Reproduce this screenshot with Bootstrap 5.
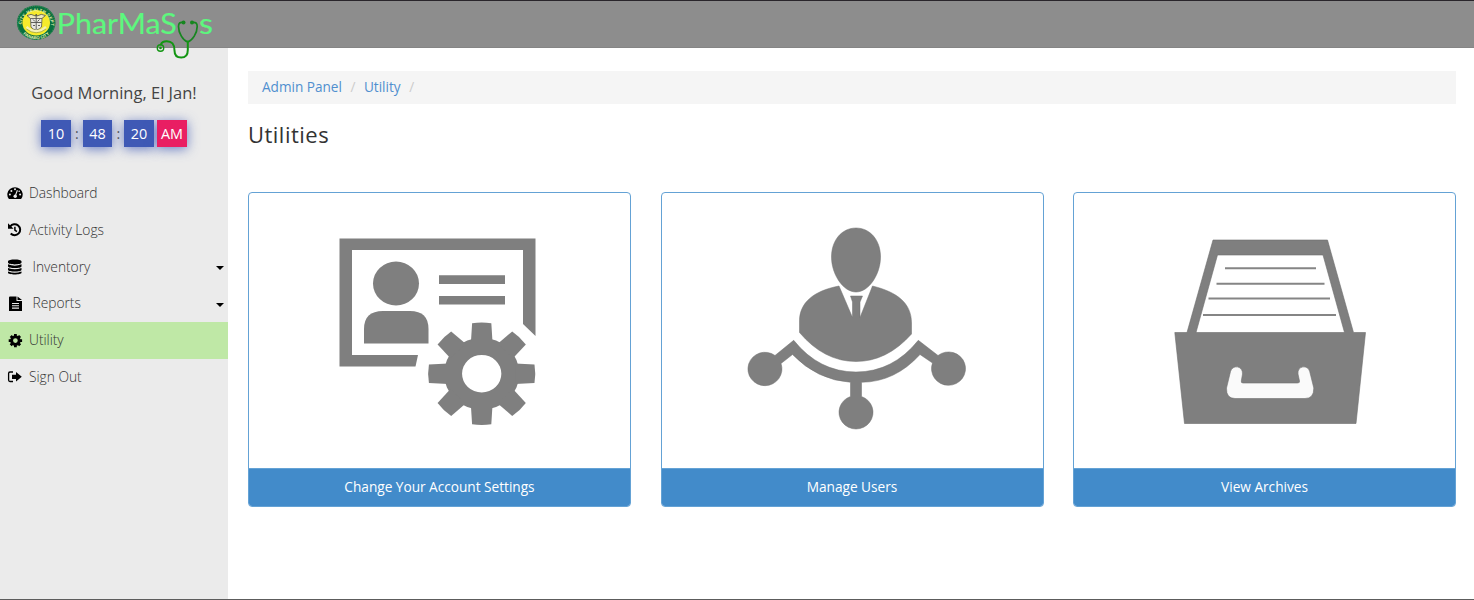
<!DOCTYPE html>
<html lang="en">
<head>
<meta charset="utf-8">
<meta name="viewport" content="width=device-width, initial-scale=1">
<title>PharMaSys - Utilities</title>
<link href="https://cdn.jsdelivr.net/npm/bootstrap@5.3.0/dist/css/bootstrap.min.css" rel="stylesheet">
<style>
  body { font-family: "Open Sans", "Noto Sans", sans-serif; font-size: 14px; color: #333; background: #fff; }
  .app { height: 600px; border-top: 1px solid #29252b; border-bottom: 1px solid #5c5c5c; }
  .topbar { height: 47px; background: #8d8d8d; border-bottom: 1px solid #858585; padding: 0 0 0 14px; z-index: 2; }
  .brand-art { width: 206px; height: 64px; overflow: visible; }
  .side { width: 228px; background: #ebebeb; }
  .greeting { font-size: 16.5px; line-height: 24px; padding-top: 33px; color: #444; }
  .clock { gap: 3.6px; padding-top: 14.6px; margin-bottom: 27.9px; color: #555; }
  .clock b { width: 29.3px; height: 27.5px; font-weight: 400; font-size: 14.4px; color: #fff; background: #3f59b5; box-shadow: 0 2px 12px rgba(63,89,181,.75); }
  .clock b.ampm { background: #e91e63; box-shadow: 0 2px 12px rgba(63,89,181,.75); }
  .clock i { font-style: normal; width: 5px; text-align: center; }
  .side-link { height: 36.8px; padding: 0 4px 0 7px; font-weight: 300; font-size: 13.8px; letter-spacing: -.03px; color: #333; }
  .side-link:hover { color: #000; }
  .side-link.active { background: #bfe8a6; }
  .side-link svg.ico { width: 16px; height: 16px; margin-right: 6px; flex: none; }
  .side-link .wide { padding-left: 3.5px; }
  .caret { width: 0; height: 0; border: 4px solid transparent; border-top-color: #000; border-bottom: 0; margin-top: 2px; }
  .content { padding: 22.5px 18px 0 20px; }
  .crumbs { background: #f5f5f5; height: 33.5px; padding: 0 14px; font-size: 13.6px; }
  .crumbs a { color: #508fcf; text-decoration: none; }
  .crumbs .sep { color: #ccc; padding: 0 8.5px; }
  .page-title { font-size: 22px; font-weight: 400; line-height: 28px; margin: 15.5px 0 44.1px; letter-spacing: .48px; color: #333; }
  .tiles { gap: 29.5px; }
  .tile { flex: 1 1 0; border: 1px solid #64a2d5; border-radius: 4px; background: #fff; overflow: hidden; }
  .tile svg { display: block; width: 100%; height: 275px; }
  .tile .card-footer { background: #428bca; color: #fff; border-top: 1px solid #64a2d5; border-radius: 0; height: 38px; padding: 0; font-size: 13.7px; letter-spacing: -.03px; }
</style>
</head>
<body>
<div class="app d-flex flex-column overflow-hidden">
  <header class="topbar position-relative flex-shrink-0">
    <svg class="brand-art d-block" viewBox="14 1 206 64" role="img" aria-label="PharMaSys">
      <defs>
        <path id="ringTop" d="M22.300 29.500A14.800 13.600 0 1 1 50.100 29.500"/>
        <path id="ringLow" d="M19.500 29A18 16.200 0 0 0 52.900 29"/>
      </defs>
      <ellipse cx="36.200" cy="22.700" rx="19.300" ry="17.200" fill="#08703f"/>
      <ellipse cx="36.200" cy="22.700" rx="18.600" ry="16.600" fill="none" stroke="#87b878" stroke-width=".5" stroke-dasharray="1 1"/>
      <ellipse cx="36.200" cy="22.700" rx="13.800" ry="12.700" fill="#f6eb2c"/>
      <g font-family="Liberation Sans, sans-serif" font-weight="700" font-size="4.200" fill="#eef2b0">
        <text><textPath href="#ringTop" startOffset="5" letter-spacing=".35">CITY HEALTH DEPT</textPath></text>
        <text><textPath href="#ringLow" startOffset="50%" text-anchor="middle">PANABO CITY</textPath></text>
      </g>
      <path d="M27 15.500q4-2.500 8.500.5l.7-2 .7 2q4.500-3 8.500-.5l-4 3.500h-10.500z" fill="#ece9bd" stroke="#4b4e3d" stroke-width=".8"/>
      <path d="M30.500 18.500h11.500l-.5 8.500q-2 2.500-5.300 3-3.500-.5-5.200-3z" fill="#e9e9e1" stroke="#555" stroke-width=".8"/>
      <path d="M36.200 15v14M31 22.500h10.500M33 19.500l2 2M39.500 19.500l-2 2M33 25.500h2M38 25.500h2" stroke="#50504d" stroke-width=".9" fill="none"/>
      <path d="M26.500 27q9.700 8.500 19.500 0" fill="none" stroke="#f4f1b3" stroke-width="2.500"/>
      <path d="M26.500 29q9.700 7.500 19.500 0" fill="none" stroke="#80883b" stroke-width=".6"/>
      <g font-family="Lato, sans-serif" font-size="28" fill="#5df77e" stroke="#5df77e" stroke-width=".15">
        <text x="56.800" y="34.200" textLength="120" lengthAdjust="spacingAndGlyphs">PharMaS</text>
        <text x="199" y="34.200" textLength="14" lengthAdjust="spacingAndGlyphs">s</text>
      </g>
      <g fill="none" stroke="#129512" stroke-width="2" stroke-linecap="round" stroke-linejoin="round">
        <path d="M183 22.500Q178.500 21.500 178.500 26.500C178.500 33 183 40.500 187.700 42C192.500 40.500 197.200 33 197.200 26.500Q197.200 21.500 192.500 22.500" stroke="#16861f" stroke-width="1.700"/>
        <path d="M187.800 41.500V50Q187.800 57.600 181.200 57.600Q174.500 57.600 174.500 50.500Q174.500 41 166.500 41.200Q162 41.400 160.800 44.500"/>
        <circle cx="160.500" cy="48" r="3.200" stroke-width="1.400"/>
      </g>
      <circle cx="160.500" cy="48" r="1.300" fill="#129512"/>
      <circle cx="183.500" cy="22.500" r="2" fill="#16861f"/><circle cx="192" cy="22.500" r="2" fill="#16861f"/>
    </svg>
  </header>

  <div class="d-flex flex-grow-1">
    <aside class="side flex-shrink-0">
      <div class="greeting text-center">Good Morning, El Jan!</div>
      <div class="clock d-flex justify-content-center align-items-center">
        <b class="d-flex align-items-center justify-content-center">10</b><i>:</i>
        <b class="d-flex align-items-center justify-content-center">48</b><i>:</i>
        <b class="d-flex align-items-center justify-content-center">20</b>
        <b class="ampm d-flex align-items-center justify-content-center">AM</b>
      </div>
      <nav class="nav flex-column flex-nowrap">
        <a class="side-link nav-link d-flex align-items-center" href="#">
          <svg class="ico" viewBox="0 0 16 16"><path d="M1.600 13.500A7.700 7.300 0 1 1 14.400 13.500Q14.200 14 13.600 14H2.400Q1.800 14 1.600 13.500z"/><g fill="#ebebeb"><circle cx="2.900" cy="9.500" r="1"/><circle cx="4.400" cy="5.900" r="1"/><circle cx="8" cy="4.200" r="1"/><circle cx="13.100" cy="9.500" r="1"/><circle cx="12.200" cy="6.200" r=".8"/></g><path d="M10.400 5.200L8.600 10" stroke="#ebebeb" stroke-width="1.100"/><circle cx="8.200" cy="11.300" r="1.700" fill="#ebebeb"/></svg>
          <span>Dashboard</span></a>
        <a class="side-link nav-link d-flex align-items-center" href="#">
          <svg class="ico" viewBox="0 0 16 16"><path d="M3.200 4.500A5.500 5.500 0 1 1 3.700 11.500" fill="none" stroke="#000" stroke-width="2"/><path d="M1 1.300V6.800h5.600z"/><path d="M7.900 4.700v3.400l2 1.500" fill="none" stroke="#000" stroke-width="1.500"/></svg>
          <span>Activity Logs</span></a>
        <a class="side-link nav-link d-flex align-items-center" href="#">
          <svg class="ico" viewBox="0 0 16 16"><path d="M1 2.300C1-.2 14.500-.2 14.500 2.300V3.500C14.500 6 1 6 1 3.500zM1 5.300Q7.700 8 14.500 5.300V7.200C14.500 9.700 1 9.700 1 7.200zM1 9Q7.700 11.700 14.500 9V10.700C14.500 13.200 1 13.200 1 10.700zM1 12.500Q7.700 15 14.500 12.500V13.800C14.500 16 1 16 1 13.800z"/></svg>
          <span class="wide flex-grow-1">Inventory</span><span class="caret"></span></a>
        <a class="side-link nav-link d-flex align-items-center" href="#">
          <svg class="ico" viewBox="0 0 16 16"><path d="M3 .5H9.500V5H15V15H2V1.500Q2 .5 3 .5zM10.500 .5L15 4H10.500z"/><path d="M5 7.500h7M5 9.800h7M5 12.100h7" stroke="#ebebeb" stroke-width="1.100"/></svg>
          <span class="wide flex-grow-1">Reports</span><span class="caret"></span></a>
        <a class="side-link nav-link active d-flex align-items-center" href="#" aria-current="page">
          <svg class="ico" viewBox="-8 -8 16 16"><g transform="translate(.4 -.4)"><circle r="3.800" fill="none" stroke="#000" stroke-width="2.900"/><g stroke="#000" stroke-width="2.800"><path d="M0-6.700V-4M0 6.700V4M-6.700 0H-4M6.700 0H4M-4.700-4.700L-3-3M4.700-4.700L3-3M-4.700 4.700L-3 3M4.700 4.700L3 3"/></g></g></svg>
          <span>Utility</span></a>
        <a class="side-link nav-link d-flex align-items-center" href="#">
          <svg class="ico" viewBox="0 0 16 16"><path d="M6 3H3Q1.600 3 1.600 4.500V11Q1.600 12.500 3 12.500H6" fill="none" stroke="#000" stroke-width="1.300"/><path d="M5 5.700H9V3L14.800 7.800 9 12.500V9.900H5z"/></svg>
          <span>Sign Out</span></a>
      </nav>
    </aside>

    <main class="content flex-grow-1">
      <nav class="crumbs d-flex align-items-center" aria-label="breadcrumb">
        <a href="#">Admin Panel</a><span class="sep">/</span><a href="#">Utility</a><span class="sep">/</span>
      </nav>
      <h1 class="page-title">Utilities</h1>
      <div class="tiles d-flex">
        <a class="tile card text-decoration-none" href="#">
          <svg viewBox="249 193 381 275" fill="#7f7f7f">
            <path fill-rule="evenodd" d="M339.500 238.500H535.500V336L523 324V250H352V355H418L415.500 366.500H339.500z"/>
            <ellipse cx="396" cy="283.500" rx="23" ry="22"/>
            <path d="M364 343.500V329Q364 311 383 311H410Q428.500 311 428.500 329V343.500z"/>
            <path d="M439 275.300h66v8.700h-66zM439 296h66v8.500h-66z"/>
            <g transform="translate(481.700 373.700) scale(1.045 1)">
              <defs><path id="cogTooth" d="M-10.300-32L-9.200-50.500Q0-52 9.200-50.500L10.300-32z"/></defs>
              <path fill-rule="evenodd" d="M0-36A36 36 0 1 1 0 36A36 36 0 1 1 0-36zM0-18.800A18.800 18.800 0 1 0 0 18.800A18.800 18.800 0 1 0 0-18.800z"/>
              <use href="#cogTooth"/><use href="#cogTooth" transform="rotate(45)"/><use href="#cogTooth" transform="rotate(90)"/><use href="#cogTooth" transform="rotate(135)"/><use href="#cogTooth" transform="rotate(180)"/><use href="#cogTooth" transform="rotate(225)"/><use href="#cogTooth" transform="rotate(270)"/><use href="#cogTooth" transform="rotate(315)"/>
            </g>
          </svg>
          <div class="card-footer d-flex align-items-center justify-content-center">Change Your Account Settings</div>
        </a>
        <a class="tile card text-decoration-none" href="#">
          <svg viewBox="662 193 381 275" fill="#7f7f7f" stroke="#707070" stroke-width=".5">
            <path d="M856 228C870 228 880.500 240 880.500 257C880.500 274 869 292 856 292C843 292 831.500 274 831.500 257C831.500 240 842 228 856 228z"/>
            <path d="M839 286L852.500 317.500V302L850.500 296H862.500L860 302V317.500L872.500 286C897 292 911.500 303 911.500 323V334Q887 361.500 856 361.500Q824 361.500 799.500 332.500V321C799.500 303 813 291 839 286z"/>
            <path d="M793.700 340.300Q819 372 856 372Q893 372 918.300 340.300L938 355.500A17 16.700 0 1 1 932.500 363L920 354.500Q895 382 861.500 382.300V396.500A17 16.700 0 1 1 850.500 396.500V382.300Q817 380 792.500 354.500L781 363.500A17 16.700 0 1 1 775 355.500z"/>
          </svg>
          <div class="card-footer d-flex align-items-center justify-content-center">Manage Users</div>
        </a>
        <a class="tile card text-decoration-none" href="#">
          <svg viewBox="1074 193 381 275" fill="#7f7f7f">
            <path fill-rule="evenodd" stroke="#6d6d6d" stroke-width=".6" d="M1213 240H1327.500L1353.500 332.500H1365.500L1356 423.500H1184.500L1174.800 332.500H1187zM1217.500 255L1196 332.500H1344.500L1323 255z"/>
            <path d="M1225 268.300H1316M1216.500 283.700H1324.500M1208.500 298.500H1330M1203 315H1336" stroke="#858585" stroke-width="2"/>
            <path d="M1230.500 371.500C1232.500 364.500 1243 365.500 1242.500 374L1241.300 381Q1241 383 1243 383H1297.500Q1300 383 1299.500 381L1298 374C1297 365.500 1308 364.500 1309.700 371.500L1313.800 388Q1314 398.500 1305 398.500H1235Q1226 398.500 1226.500 388z" fill="#fafafa" stroke="#707070" stroke-width=".6"/>
          </svg>
          <div class="card-footer d-flex align-items-center justify-content-center">View Archives</div>
        </a>
      </div>
    </main>
  </div>
</div>
<script src="https://cdn.jsdelivr.net/npm/bootstrap@5.3.0/dist/js/bootstrap.bundle.min.js"></script>
</body>
</html>
